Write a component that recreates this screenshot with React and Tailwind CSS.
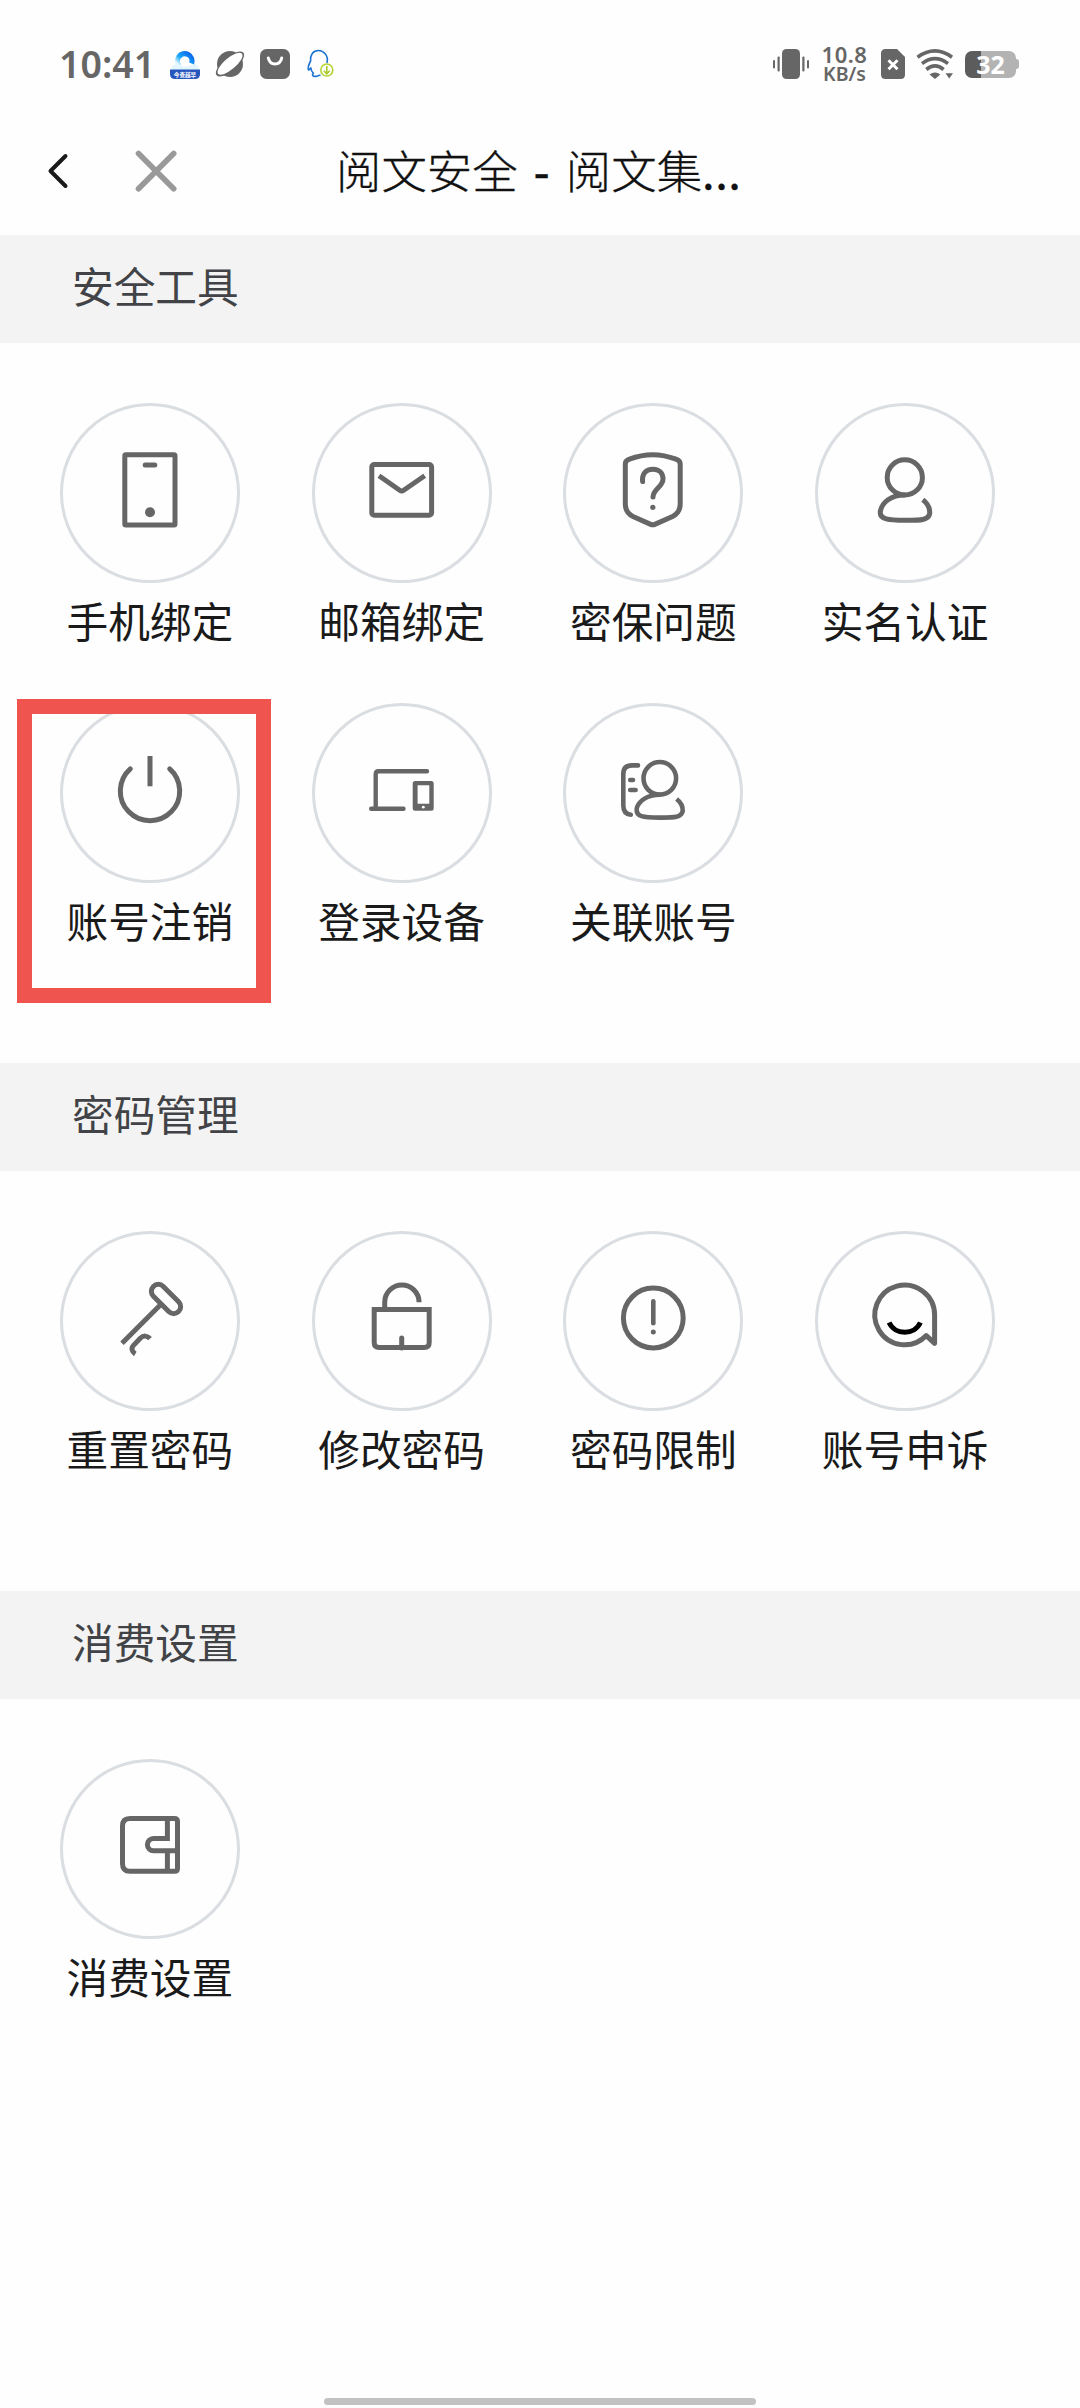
const icons = {
  phone: (
    <>
      <rect x="64.8" y="51.8" width="50.2" height="70.2" rx="1" />
      <path d="M85.2 62H94.8" strokeLinecap="round" />
      <circle cx="90" cy="109.3" r="5" fill="#666" stroke="none" />
    </>
  ),
  mail: (
    <>
      <rect x="59.8" y="61.5" width="59.8" height="50.7" rx="2.5" />
      <path d="M67 72.7L87.7 87.3Q89.7 88.7 91.7 87.3L112.7 72.7" />
    </>
  ),
  shield: (
    <>
      <path d="M62.3 61C62.3 58.5 63.5 57.3 66.5 56.2Q89.7 47.2 113 56.2C116 57.3 117.2 58.5 117.2 61V101C117.2 106.5 114.5 111 109.5 113.5L91.8 121.4Q89.7 122.3 87.7 121.4L70 113.5C65 111 62.3 106.5 62.3 101Z" />
      <path d="M79.6 78.6C78.9 70.5 83 66.2 90 66.2C97 66.2 100 71 100 76C100 84 90 86 90 94" strokeLinecap="round" />
      <circle cx="89.8" cy="104.3" r="2.6" fill="#666" stroke="none" />
    </>
  ),
  user: (
    <>
      <circle cx="89.8" cy="74.4" r="17.6" />
      <path d="M90 92C76 92 67 99 65.3 108.5C64.3 116.5 74 117.3 90 117.3C105 117.3 113.5 117.5 114.7 110.5C115 105 112 100 107.8 96.8" />
    </>
  ),
  power: (
    <>
      <path d="M90 53V83.3" />
      <path d="M70.3 65.8A29.7 29.7 0 1 0 109.7 65.8" strokeLinecap="round" />
    </>
  ),
  devices: (
    <>
      <path d="M115 68.3H66.7Q63.7 68.3 63.7 71.3V105.7M59.2 105.7H91.5" strokeWidth="4.4" strokeLinecap="round" />
      <path d="M103.2 78H119.2Q121.7 78 121.7 80.5V105.2Q121.7 107.7 119.2 107.7H103.2Q100.7 107.7 100.7 105.2V80.5Q100.7 78 103.2 78ZM105.6 82.3V100.7H117.3V82.3Z" fill="#666" fillRule="evenodd" stroke="none" />
      <circle cx="111.3" cy="104.2" r="1.4" fill="#fff" stroke="none" />
    </>
  ),
  linked: (
    <g strokeWidth="4.6">
      <circle cx="96.8" cy="75.3" r="16.3" />
      <path d="M97 91.8C84 91.8 75.5 98 73.7 105.5C72.7 113.8 80 114.6 96.7 114.6C111 114.6 118.3 114.8 119.7 108C120 103 117.5 99 113.6 96" />
      <path d="M75 62.4H69Q60.3 62.4 60.3 71V102.5Q60.3 111 67.8 111.8M67.2 77H70M67.2 87H72.6" strokeLinecap="round" />
    </g>
  ),
  key: (
    <>
      <path d="M103.3 55.4L118.6 70.7A7 7 0 0 1 108.7 80.6L93.4 65.3A7 7 0 0 1 103.3 55.4Z" />
      <path d="M101 73.3L62 112.3" />
      <path d="M90 107.6C87.3 104.5 83.4 104.3 80.5 107L73.5 114.4C71 117 71.7 120.8 75.3 123" />
    </>
  ),
  lock: (
    <>
      <path d="M62.2 78.5H117.2V111.5Q117.2 116.5 112.2 116.5H67.2Q62.2 116.5 62.2 111.5Z" />
      <path d="M72.7 78V71.2A17.2 17.2 0 0 1 107.1 71.3" />
      <path d="M89.7 107V117" strokeLinecap="round" />
    </>
  ),
  limit: (
    <>
      <circle cx="90.3" cy="87" r="29.9" />
      <path d="M90.3 70.3V92.2" strokeWidth="4.6" strokeLinecap="round" />
      <circle cx="90.3" cy="101" r="2.5" fill="#666" stroke="none" />
    </>
  ),
  appeal: (
    <>
      <path d="M119.6 84A29.9 29.9 0 1 0 111.3 104.6L119.6 112.3Z" strokeLinejoin="round" />
      <path d="M74.1 91.5C80 104.5 99.5 104.5 105.4 91.5" stroke="#000" />
    </>
  ),
  wallet: (
    <>
      <path d="M70 59.5H114.5Q117.5 59.5 117.5 62.5V109.2Q117.5 112.2 114.5 112.2H70Q62.5 112.2 62.5 104.7V67Q62.5 59.5 70 59.5Z" />
      <path d="M107.4 59.5V79.5H93.5A6.1 6.1 0 0 0 93.5 91.7H117M107.4 91.7V112" />
    </>
  ),
};

const sections = [
  {
    title: "安全工具",
    items: [
      ["phone", "手机绑定"],
      ["mail", "邮箱绑定"],
      ["shield", "密保问题"],
      ["user", "实名认证"],
      ["power", "账号注销", true],
      ["devices", "登录设备"],
      ["linked", "关联账号"],
    ],
  },
  {
    title: "密码管理",
    items: [
      ["key", "重置密码"],
      ["lock", "修改密码"],
      ["limit", "密码限制"],
      ["appeal", "账号申诉"],
    ],
  },
  { title: "消费设置", items: [["wallet", "消费设置"]] },
];

function StatusBar() {
  return (
    <div className="flex h-32 items-center justify-between pl-[59px] pr-[61px] font-['Noto_Sans'] text-[#666]">
      <div className="flex items-center gap-[15px]">
        <div className="w-[96px] whitespace-nowrap text-[37.5px] font-semibold leading-none">10:41</div>
        <svg className="size-[30px]" viewBox="0 0 30 30">
          <defs>
            <linearGradient id="ring" x1="0" y1="1" x2="1" y2="0">
              <stop offset=".1" stopColor="#e6f8ff" />
              <stop offset=".45" stopColor="#16a8fa" />
              <stop offset="1" stopColor="#0b62e8" />
            </linearGradient>
          </defs>
          <path d="M1 21Q2 14 9 16Q15 20 24 15Q29 15 29 21Z" fill="#e2f6fd" />
          <path d="M9.6 17.2A7.3 7.3 0 1 1 21.6 14.5" fill="none" stroke="url(#ring)" strokeWidth="5.2" />
          <path d="M0 20.5H30V25Q30 30 25 30H5Q0 30 0 25Z" fill="#2756bd" />
          <text x="15" y="27.8" textAnchor="middle" fontSize="5.6" fontWeight="700" fill="#fff" fontFamily="Noto Sans CJK SC">今查越早</text>
        </svg>
        <svg className="size-[30px]" viewBox="0 0 30 30">
          <circle cx="15" cy="15" r="13" fill="#666" />
          <ellipse cx="15" cy="15" rx="17.5" ry="7" transform="rotate(-40 15 15)" fill="#666" />
          <ellipse cx="15.2" cy="14.8" rx="15.6" ry="5.7" transform="rotate(-40 15 15)" fill="#fff" />
        </svg>
        <svg className="size-[30px]" viewBox="0 0 30 30">
          <rect width="30" height="30" rx="6.5" fill="#666" />
          <path d="M8.3 9C10 17 20 17 21.7 9" fill="none" stroke="#fff" strokeWidth="3" strokeLinecap="round" />
        </svg>
        <svg className="size-[30px]" viewBox="0 0 30 30" fill="none">
          <path d="M22 14C24 6 18 1.5 13.5 1.5C8 1.5 5 6 5.6 12C4 15 2.3 19 3.6 21C4.3 21 5 20 5.8 18.8C6 21 7 23 8.4 24.2C6.5 26 7.5 27.6 11 27.4L15.5 26" stroke="#1b73d2" strokeWidth="1.6" strokeLinejoin="round" />
          <circle cx="21.8" cy="21" r="6" fill="#fff" stroke="#b3d334" strokeWidth="1.6" />
          <path d="M21.8 17V24.5M18.8 21.8L21.8 24.8L24.8 21.8" stroke="#a9c92c" strokeWidth="1.6" />
        </svg>
      </div>
      <div className="flex items-center">
        <svg className="h-[30px] w-9" viewBox="0 0 36 30" fill="#666">
          <rect x="9" width="18" height="30" rx="4.5" />
          <rect y="11" width="2" height="8.5" rx="1" />
          <rect x="4.5" y="7.5" width="2.2" height="15" rx="1" />
          <rect x="29.3" y="7.5" width="2.2" height="15" rx="1" />
          <rect x="34" y="11" width="2" height="8.5" rx="1" />
        </svg>
        <div className="ml-3 w-[47px] whitespace-nowrap text-center font-semibold">
          <div className="text-[22px] leading-[19px] tracking-[0.5px]">10.8</div>
          <div className="text-[19.5px] leading-[20px]">KB/s</div>
        </div>
        <svg className="ml-[13px] h-[30px] w-6" viewBox="0 0 24 30">
          <path d="M4.5 0H16L24 8V25.5Q24 30 19.5 30H4.5Q0 30 0 25.5V4.5Q0 0 4.5 0Z" fill="#666" />
          <path d="M7.5 11.2L16.5 20.2M16.5 11.2L7.5 20.2" stroke="#fff" strokeWidth="3" />
        </svg>
        <svg className="ml-[11px] h-[30px] w-[38px]" viewBox="0 0 38 30" fill="none" stroke="#666" strokeWidth="3.6">
          <path d="M1.5 8.2Q19 -4.3 36 8.2M6 14.6Q19 4.8 32 14.6M10.3 20.5Q19 13.3 27.6 20.5" />
          <path d="M13.5 25.5Q19 21.7 24.3 25.5L19 30Z" fill="#666" stroke="none" />
          <path d="M29.5 24.2H37L33.2 29.5Z" fill="#666" stroke="none" />
        </svg>
        <div className="ml-[11px] flex items-center">
          <div className="flex h-[27px] w-[51px] items-center justify-center rounded-[7px] bg-[linear-gradient(90deg,#5c5c5c_16px,#b3b3b3_16px)] text-[25px] font-bold leading-none text-white">32</div>
          <div className="h-[10px] w-[3px] rounded-r-sm bg-[#b3b3b3]" />
        </div>
      </div>
    </div>
  );
}

function NavBar() {
  return (
    <div className="flex h-[107px] items-start pl-[44px] pt-[20px]">
      <svg className="h-[46px] w-7" viewBox="44 148 28 46" fill="none" stroke="#1a1a1a" strokeWidth="4" strokeLinecap="round" strokeLinejoin="round">
        <path d="M65.5 156L50.5 171L65.5 186" />
      </svg>
      <svg className="ml-[61px] h-[46px] w-[46px]" viewBox="133 148 46 46" stroke="#999" strokeWidth="5.6" strokeLinecap="round">
        <path d="M138.5 153.5L173.7 188.7M173.7 153.5L138.5 188.7" />
      </svg>
      <h1 className="-mt-[2px] ml-[157px] whitespace-nowrap text-[45.4px] font-light leading-[46px] text-[#111] [-webkit-text-stroke:0.3px_#111] [word-spacing:3px]">
        阅文安全 <span className="mx-[3px] font-medium">-</span> 阅文集<span className="font-normal tracking-[0.5px]">...</span>
      </h1>
    </div>
  );
}

function Tool({ icon, label, marked }) {
  return (
    <div className="relative flex h-[300px] flex-col items-center">
      <div className="size-[180px] rounded-full border-[3px] border-[#dadde1]">
        <svg className="-m-[3px] size-[180px]" viewBox="0 0 180 180" fill="none" stroke="#666" strokeWidth="5">
          {icons[icon]}
        </svg>
      </div>
      <div className="mt-[7px] whitespace-nowrap text-[41.7px] leading-[60px] text-[#1a1a1a]">{label}</div>
      {marked && <div className="absolute -left-[7px] -top-[4px] h-[304px] w-[254px] border-[15px] border-[#f0544f]" />}
    </div>
  );
}

export default function App() {
  return (
    <div className="flex h-[2408px] w-[1080px] flex-col overflow-hidden bg-[#fefefe] font-['Noto_Sans_CJK_SC',sans-serif]">
      <StatusBar />
      <NavBar />
      {sections.map((s) => (
        <section key={s.title} className="pb-[60px]">
          <h2 className="flex h-[108px] items-center bg-[#f3f3f3] pb-1.5 pl-[72px] text-[41.7px] leading-none text-[#414347]">{s.title}</h2>
          <div className="ml-6 grid w-[1007px] grid-cols-4 pt-[60px]">
            {s.items.map(([icon, label, marked]) => (
              <Tool key={label} icon={icon} label={label} marked={marked} />
            ))}
          </div>
        </section>
      ))}
      <div className="mb-[3px] mt-auto h-[7px] w-[432px] self-center rounded-full bg-[#c2c2c2]" />
    </div>
  );
}
